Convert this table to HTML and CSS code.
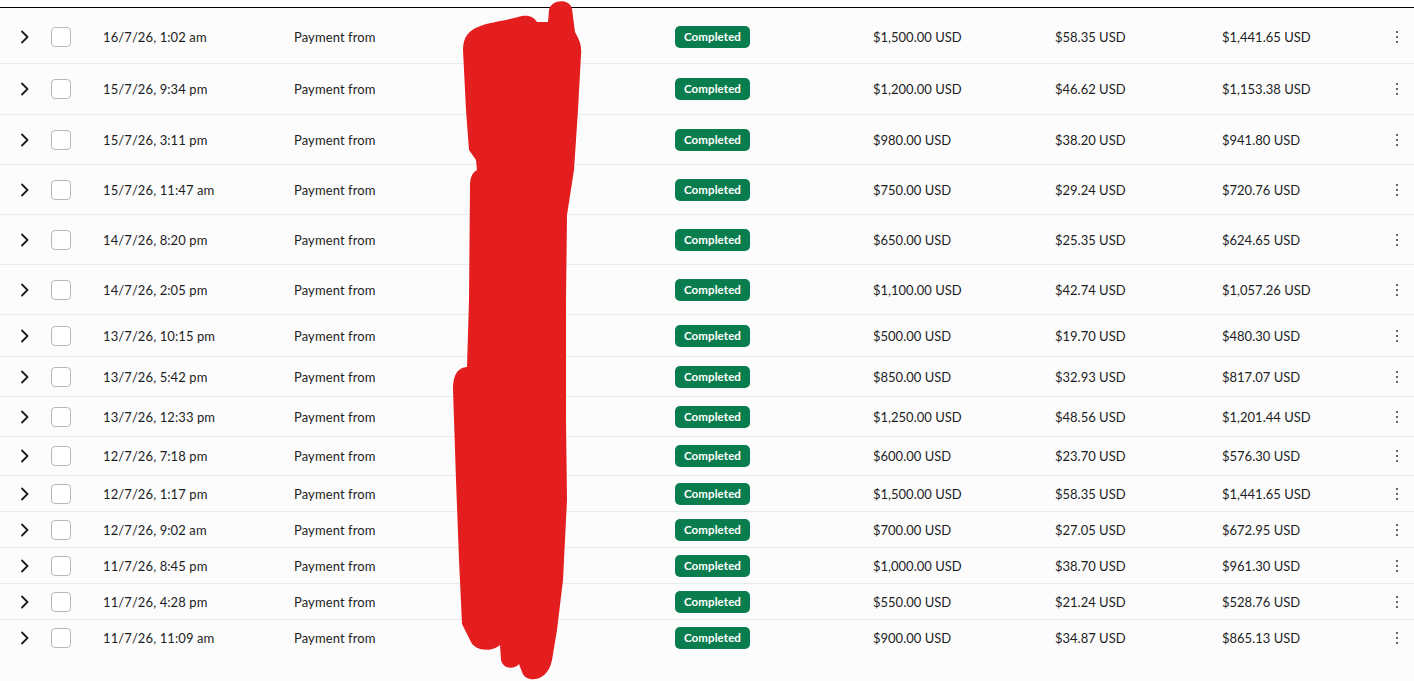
FILE: index.html
```html
<!DOCTYPE html>
<html lang="en">
<head>
    <meta charset="UTF-8">
    <meta name="viewport" content="width=device-width, initial-scale=1.0">
    <title>Payments</title>
    <link rel="stylesheet" href="styles.css">
</head>
<body>

    <div class="page">
        <div class="top-gap"></div>

        <div class="tx-list" id="tx-list"></div>

        <!-- redaction scribble over the payer column -->
        <svg class="scribble" viewBox="0 0 1414 681" width="1414" height="681">
            <path d="M463 50 C463 36 470 30 478 27 C490 22 505 21 518 17 C528 14 534 17 537 22 L548 22
                     L549 10 C551 -1 570 -2 572 9 L575 32 C578 38 582 43 581 55
                     L578 110 L574 170 L567 215 L566 300 L566 420 L567 500 L563 580 L557 630 L552 660
                     C548 682 526 684 522 672 L519 664 C514 670 503 669 501 660 L500 645
                     C493 652 474 652 470 640 L462 624 L459 560 L456 480 L453 390
                     C453 374 458 368 467 367 L469 300 L470 185 C470 177 473 172 477 170
                     L476 160 L469 150 L466 110 Z" />
        </svg>
    </div>

    <script src="app.js"></script>
</body>
</html>
```

FILE: styles.css
```css
* {
    box-sizing: border-box;
}

body {
    margin: 0;
    background: #fcfcfc;
    font-family: "Lato", "Liberation Sans", sans-serif;
    color: #1d1d1f;
}

.page {
    position: relative;
    width: 1414px;
    height: 681px;
    overflow: hidden;
}

.top-gap {
    height: 8px;
    background: #fff;
    border-bottom: 1px solid #000;
}

.tx-row {
    display: grid;
    grid-template-columns: 51px 52px 191px 381px 198px 182px 167px 1fr 34px;
    align-items: center;
    height: 50px;
    border-bottom: 1px solid #ebebeb;
    font-size: 13px;
}

.tx-row.first {
    height: 56px;
    padding-top: 3px;
}

.tx-row.second {
    height: 51px;
}

.tx-row.mid-top {
    height: 42px;
}

.tx-row.mid {
    height: 40px;
}

.tx-row.mid-end {
    height: 39px;
}

.tx-row.short {
    height: 36px;
}

.tx-row.last {
    border-bottom: none;
}

.chevron {
    padding-left: 20px;
    display: flex;
}

.checkbox {
    width: 20px;
    height: 20px;
    border: 1px solid #b8b8b8;
    border-radius: 4px;
    background: #fff;
}

.date,
.payer {
    letter-spacing: 0.1px;
}

.badge {
    display: inline-block;
    justify-self: start;
    padding: 4px 9px 5px 9px;
    border-radius: 5px;
    background: #0a7d4e;
    color: #fff;
    font-size: 11.5px;
    font-weight: 700;
    letter-spacing: 0.1px;
}

.kebab {
    display: flex;
    flex-direction: column;
    align-items: center;
    gap: 3px;
    padding-right: 1px;
}

.kebab span {
    width: 2px;
    height: 2px;
    border-radius: 1px;
    background: #333;
}

.scribble {
    position: absolute;
    top: 0;
    left: 0;
    pointer-events: none;
}

.scribble path {
    fill: #e41e1e;
}
```

FILE: app.js
```js
const rows = [
    ['16/7/26, 1:02 am', '$1,500.00 USD', '$58.35 USD', '$1,441.65 USD', 'first'],
    ['15/7/26, 9:34 pm', '$1,200.00 USD', '$46.62 USD', '$1,153.38 USD', 'second'],
    ['15/7/26, 3:11 pm', '$980.00 USD', '$38.20 USD', '$941.80 USD', ''],
    ['15/7/26, 11:47 am', '$750.00 USD', '$29.24 USD', '$720.76 USD', ''],
    ['14/7/26, 8:20 pm', '$650.00 USD', '$25.35 USD', '$624.65 USD', ''],
    ['14/7/26, 2:05 pm', '$1,100.00 USD', '$42.74 USD', '$1,057.26 USD', ''],
    ['13/7/26, 10:15 pm', '$500.00 USD', '$19.70 USD', '$480.30 USD', 'mid-top'],
    ['13/7/26, 5:42 pm', '$850.00 USD', '$32.93 USD', '$817.07 USD', 'mid'],
    ['13/7/26, 12:33 pm', '$1,250.00 USD', '$48.56 USD', '$1,201.44 USD', 'mid'],
    ['12/7/26, 7:18 pm', '$600.00 USD', '$23.70 USD', '$576.30 USD', 'mid-end'],
    ['12/7/26, 1:17 pm', '$1,500.00 USD', '$58.35 USD', '$1,441.65 USD', 'short'],
    ['12/7/26, 9:02 am', '$700.00 USD', '$27.05 USD', '$672.95 USD', 'short'],
    ['11/7/26, 8:45 pm', '$1,000.00 USD', '$38.70 USD', '$961.30 USD', 'short'],
    ['11/7/26, 4:28 pm', '$550.00 USD', '$21.24 USD', '$528.76 USD', 'short'],
    ['11/7/26, 11:09 am', '$900.00 USD', '$34.87 USD', '$865.13 USD', 'short last']
];

const list = document.getElementById('tx-list');

rows.forEach(function (r) {
    const row = document.createElement('div');
    row.className = ('tx-row ' + r[4]).trim();
    row.innerHTML = `
        <div class="chevron">
            <svg width="9" height="14" viewBox="0 0 9 14"><path d="M2 1.5 L7.5 7 L2 12.5" fill="none" stroke="#1d1d1f" stroke-width="1.8" stroke-linecap="round" stroke-linejoin="round"/></svg>
        </div>
        <div><div class="checkbox"></div></div>
        <div class="date">${r[0]}</div>
        <div class="payer">Payment from</div>
        <span class="badge">Completed</span>
        <div>${r[1]}</div>
        <div>${r[2]}</div>
        <div>${r[3]}</div>
        <div class="kebab"><span></span><span></span><span></span></div>
    `;
    list.appendChild(row);
});
```
